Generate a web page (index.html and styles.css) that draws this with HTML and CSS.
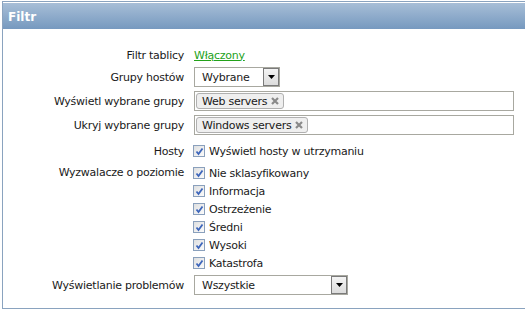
FILE: index.html
```html
<!DOCTYPE html>
<html lang="pl">
<head>
    <meta charset="UTF-8">
    <meta name="viewport" content="width=device-width, initial-scale=1.0">
    <title>Filtr</title>
    <link rel="stylesheet" href="styles.css">
</head>
<body>
    <div class="panel">
        <div class="panel-header">Filtr</div>
        <form class="filter-form">
            <div class="row row-table">
                <label class="label">Filtr tablicy</label>
                <div class="value"><a href="#" class="link-enabled">Włączony</a></div>
            </div>
            <div class="row row-groups">
                <label class="label">Grupy hostów</label>
                <div class="value">
                    <div class="select select-short">
                        <span class="select-text">Wybrane</span>
                        <span class="select-btn">
                            <svg width="7" height="4" viewBox="0 0 7 4"><path d="M0 0 H7 L3.5 4 Z" fill="#000"/></svg>
                        </span>
                    </div>
                </div>
            </div>
            <div class="row row-multi">
                <label class="label">Wyświetl wybrane grupy</label>
                <div class="value">
                    <div class="multiselect">
                        <span class="tag">Web servers
                            <svg class="tag-x" width="8" height="8" viewBox="0 0 8 8"><path d="M1 1 L7 7 M7 1 L1 7" stroke="#8a8a8a" stroke-width="2.2"/></svg>
                        </span>
                    </div>
                </div>
            </div>
            <div class="row row-multi">
                <label class="label">Ukryj wybrane grupy</label>
                <div class="value">
                    <div class="multiselect">
                        <span class="tag">Windows servers
                            <svg class="tag-x" width="8" height="8" viewBox="0 0 8 8"><path d="M1 1 L7 7 M7 1 L1 7" stroke="#8a8a8a" stroke-width="2.2"/></svg>
                        </span>
                    </div>
                </div>
            </div>
            <div class="row row-hosts">
                <label class="label">Hosty</label>
                <div class="value">
                    <div class="check-item"><span class="checkbox"><svg width="9" height="9" viewBox="0 0 9 9"><path d="M1.5 4.5 L3.5 7 L7.5 1.5" fill="none" stroke="#3d66bb" stroke-width="1.8"/></svg></span>Wyświetl hosty w utrzymaniu</div>
                </div>
            </div>
            <div class="row row-triggers">
                <label class="label">Wyzwalacze o poziomie</label>
                <div class="value check-list">
                    <div class="check-item"><span class="checkbox"><svg width="9" height="9" viewBox="0 0 9 9"><path d="M1.5 4.5 L3.5 7 L7.5 1.5" fill="none" stroke="#3d66bb" stroke-width="1.8"/></svg></span>Nie sklasyfikowany</div>
                    <div class="check-item"><span class="checkbox"><svg width="9" height="9" viewBox="0 0 9 9"><path d="M1.5 4.5 L3.5 7 L7.5 1.5" fill="none" stroke="#3d66bb" stroke-width="1.8"/></svg></span>Informacja</div>
                    <div class="check-item"><span class="checkbox"><svg width="9" height="9" viewBox="0 0 9 9"><path d="M1.5 4.5 L3.5 7 L7.5 1.5" fill="none" stroke="#3d66bb" stroke-width="1.8"/></svg></span>Ostrzeżenie</div>
                    <div class="check-item"><span class="checkbox"><svg width="9" height="9" viewBox="0 0 9 9"><path d="M1.5 4.5 L3.5 7 L7.5 1.5" fill="none" stroke="#3d66bb" stroke-width="1.8"/></svg></span>Średni</div>
                    <div class="check-item"><span class="checkbox"><svg width="9" height="9" viewBox="0 0 9 9"><path d="M1.5 4.5 L3.5 7 L7.5 1.5" fill="none" stroke="#3d66bb" stroke-width="1.8"/></svg></span>Wysoki</div>
                    <div class="check-item"><span class="checkbox"><svg width="9" height="9" viewBox="0 0 9 9"><path d="M1.5 4.5 L3.5 7 L7.5 1.5" fill="none" stroke="#3d66bb" stroke-width="1.8"/></svg></span>Katastrofa</div>
                </div>
            </div>
            <div class="row row-problems">
                <label class="label">Wyświetlanie problemów</label>
                <div class="value">
                    <div class="select select-long">
                        <span class="select-text">Wszystkie</span>
                        <span class="select-btn">
                            <svg width="7" height="4" viewBox="0 0 7 4"><path d="M0 0 H7 L3.5 4 Z" fill="#000"/></svg>
                        </span>
                    </div>
                </div>
            </div>
        </form>
    </div>
</body>
</html>
```

FILE: styles.css
```css
/* Global styles */
body {
    margin: 0;
    font-family: "DejaVu Sans", Verdana, sans-serif;
    font-size: 11px;
    letter-spacing: -0.25px;
    color: #1a1a1a;
    background-color: #fff;
    overflow: hidden;
}

.panel {
    box-sizing: border-box;
    height: 308px;
    margin: 1px -20px 0 2px;
    border: 1px solid #8aa3bf;
}

.panel-header {
    height: 23px;
    margin-top: 1px;
    padding: 3px 0 0 5px;
    line-height: 23px;
    background: linear-gradient(#a7bed7, #7699bf);
    color: #fff;
    font-size: 12px;
    font-weight: bold;
    letter-spacing: 0;
}

.filter-form {
    padding-top: 16px;
}

.row {
    display: grid;
    grid-template-columns: 181px 1fr;
    column-gap: 10px;
    align-items: center;
    min-height: 20px;
}

.label {
    text-align: right;
    white-space: nowrap;
}

.row-groups { margin-top: 2px; }
.row-multi { margin-top: 4px; }
.row-hosts { margin-top: 8px; min-height: 16px; }
.row-triggers { margin-top: 5px; align-items: start; }
.row-triggers .label { line-height: 18px; }
.row-problems { margin-top: 3px; }

.link-enabled {
    color: #23a21a;
}

/* fake selects */
.select {
    box-sizing: border-box;
    height: 20px;
    border: 1px solid #a8a8a0;
    background-color: #fff;
    display: flex;
    align-items: center;
    justify-content: space-between;
}

.select-short { width: 86px; }
.select-long { width: 154px; }

.select-text {
    padding-left: 7px;
}

.select-btn {
    box-sizing: border-box;
    width: 16px;
    height: 18px;
    border: 1px solid #7a7a7a;
    background: linear-gradient(#f4f4f4, #dcdcdc);
    display: flex;
    align-items: center;
    justify-content: center;
}

.multiselect {
    box-sizing: border-box;
    width: 320px;
    height: 20px;
    border: 1px solid #a8a8a0;
    padding: 1px 0 0 1px;
    display: flex;
    align-items: flex-start;
}

.tag {
    box-sizing: border-box;
    height: 16px;
    padding: 0 4px 0 5px;
    border: 1px solid #b0b0b0;
    border-radius: 3px;
    background-color: #efefef;
    display: flex;
    align-items: center;
    gap: 4px;
    white-space: nowrap;
}

/* checkboxes */
.check-list {
    display: flex;
    flex-direction: column;
}

.check-item {
    display: flex;
    align-items: center;
    gap: 4px;
    height: 18px;
    margin-left: -1px;
    white-space: nowrap;
}

.row-hosts .check-item { height: 16px; }

.checkbox {
    box-sizing: border-box;
    width: 12px;
    height: 12px;
    border: 1px solid #8aa0bc;
    background: linear-gradient(135deg, #dedfe0, #fbfbfb);
    display: flex;
    align-items: center;
    justify-content: center;
}
```
